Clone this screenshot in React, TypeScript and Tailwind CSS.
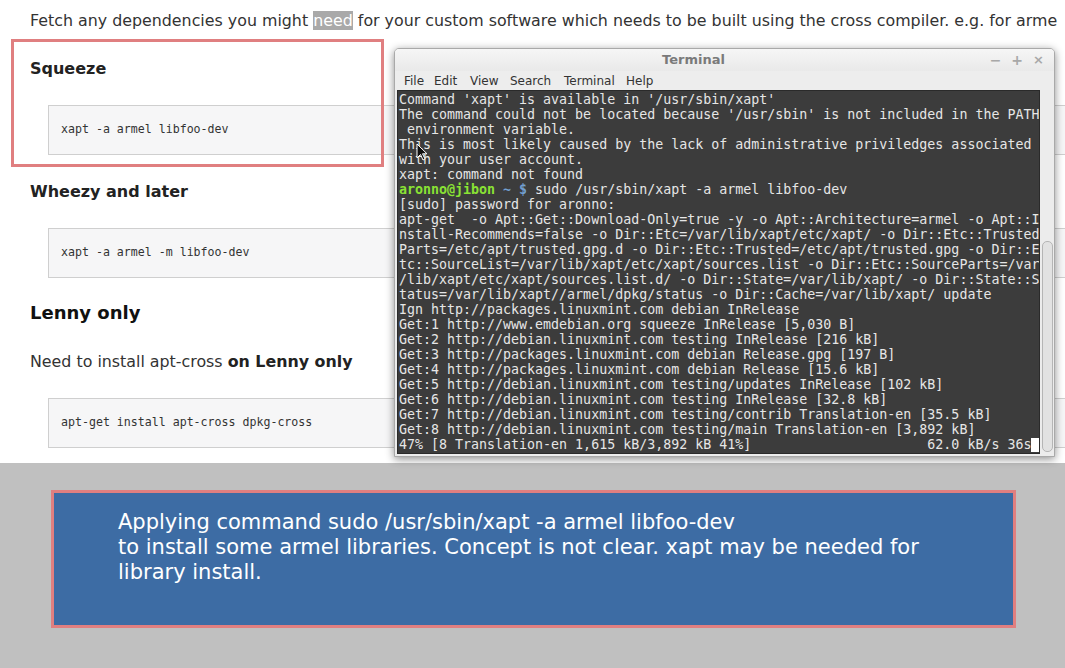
import React from "react";

const termLines: React.ReactNode[] = [
  "Command 'xapt' is available in '/usr/sbin/xapt'",
  "The command could not be located because '/usr/sbin' is not included in the PATH",
  " environment variable.",
  "This is most likely caused by the lack of administrative priviledges associated",
  "with your user account.",
  "xapt: command not found",
  <>
    <span className="font-bold text-[#8ae234]">aronno@jibon</span>
    <span className="font-bold text-[#729fcf]"> ~ $</span>
    {" sudo /usr/sbin/xapt -a armel libfoo-dev"}
  </>,
  "[sudo] password for aronno:",
  "apt-get  -o Apt::Get::Download-Only=true -y -o Apt::Architecture=armel -o Apt::I",
  "nstall-Recommends=false -o Dir::Etc=/var/lib/xapt/etc/xapt/ -o Dir::Etc::Trusted",
  "Parts=/etc/apt/trusted.gpg.d -o Dir::Etc::Trusted=/etc/apt/trusted.gpg -o Dir::E",
  "tc::SourceList=/var/lib/xapt/etc/xapt/sources.list -o Dir::Etc::SourceParts=/var",
  "/lib/xapt/etc/xapt/sources.list.d/ -o Dir::State=/var/lib/xapt/ -o Dir::State::S",
  "tatus=/var/lib/xapt//armel/dpkg/status -o Dir::Cache=/var/lib/xapt/ update",
  "Ign http://packages.linuxmint.com debian InRelease",
  "Get:1 http://www.emdebian.org squeeze InRelease [5,030 B]",
  "Get:2 http://debian.linuxmint.com testing InRelease [216 kB]",
  "Get:3 http://packages.linuxmint.com debian Release.gpg [197 B]",
  "Get:4 http://packages.linuxmint.com debian Release [15.6 kB]",
  "Get:5 http://debian.linuxmint.com testing/updates InRelease [102 kB]",
  "Get:6 http://debian.linuxmint.com testing InRelease [32.8 kB]",
  "Get:7 http://debian.linuxmint.com testing/contrib Translation-en [35.5 kB]",
  "Get:8 http://debian.linuxmint.com testing/main Translation-en [3,892 kB]",
  <>
    {"47% [8 Translation-en 1,615 kB/3,892 kB 41%]                      62.0 kB/s 36s"}
    <span className="inline-block w-[8px] h-[14px] bg-white align-[-3px]" />
  </>,
];

function CodeBlock({ children }: { children: React.ReactNode }) {
  return (
    <div className="ml-[18px] mr-[-40px] h-[50px] border border-[#cfcfcf] bg-[#f6f6f7] flex items-center pl-[12px] font-['DejaVu_Sans_Mono',monospace] text-[11.6px] text-[#333] whitespace-pre">
      {children}
    </div>
  );
}

export default function App() {
  return (
    <div className="relative w-[1065px] h-[668px] overflow-hidden bg-white font-['DejaVu_Sans',sans-serif]">
      {/* Document page */}
      <div className="h-[463px] bg-white pl-[30px] pt-[9px] text-[#333] overflow-hidden">
        <p className="text-[15.85px] leading-[24px] whitespace-nowrap">
          Fetch any dependencies you might{" "}
          <span className="bg-[#a9a9a9] text-white">need</span> for your custom software which needs to be built using the cross compiler. e.g. for arme
        </p>
        <h3 className="mt-[24px] text-[16px] leading-[24px] font-bold text-[#222]">Squeeze</h3>
        <div className="mt-[24px]">
          <CodeBlock>xapt -a armel libfoo-dev</CodeBlock>
        </div>
        <h3 className="mt-[25px] text-[16px] leading-[24px] font-bold text-[#222]">Wheezy and later</h3>
        <div className="mt-[24px]">
          <CodeBlock>xapt -a armel -m libfoo-dev</CodeBlock>
        </div>
        <h2 className="mt-[22px] text-[18px] leading-[26px] font-bold text-[#111]">Lenny only</h2>
        <p className="mt-[24px] text-[15.85px] leading-[24px]">
          Need to install apt-cross <b className="font-bold text-[#222]">on Lenny only</b>
        </p>
        <div className="mt-[24px]">
          <CodeBlock>apt-get install apt-cross dpkg-cross</CodeBlock>
        </div>
      </div>

      {/* Bottom annotation area */}
      <div className="h-[205px] bg-[#c0c0c0] pt-[27px] pl-[51px]">
        <div className="w-[965px] h-[138px] border-[3px] border-[#e07f80] bg-[#3d6ca4] pl-[64px] pt-[17px] text-white text-[21px] leading-[25px]">
          <p className="whitespace-nowrap">Applying command sudo /usr/sbin/xapt -a armel libfoo-dev</p>
          <p className="w-[815px]">
            to install some armel libraries. Concept is not clear. xapt may be needed for library install.
          </p>
        </div>
      </div>

      {/* Red annotation box over Squeeze */}
      <div className="absolute left-[11px] top-[39px] w-[373px] h-[128px] border-[3px] border-[#e07f80] pointer-events-none" />

      {/* Terminal window */}
      <div className="absolute left-[394px] top-[48px] w-[661px] h-[409px] rounded-t-[5px] border border-[#a9a9a9] bg-[#ececec] shadow-[0_2px_8px_rgba(0,0,0,0.45)] flex flex-col overflow-hidden">
        <div className="relative h-[22px] shrink-0 bg-gradient-to-b from-[#f6f6f6] to-[#e9e9e9] flex items-center justify-center pr-[62px]">
          <span className="text-[13px] font-bold text-[#7a7a7a]">Terminal</span>
          <div className="absolute right-[10px] top-0 h-full flex items-center gap-[10px] text-[#a8a8a8] text-[14px] font-bold">
            <span>−</span>
            <span>+</span>
            <span className="text-[13px]">×</span>
          </div>
        </div>
        <div className="h-[19px] shrink-0 flex items-center pl-[9px] text-[12px] text-[#333] bg-[#ededed]">
          <span className="w-[30px]">File</span>
          <span className="w-[36px]">Edit</span>
          <span className="w-[40px]">View</span>
          <span className="w-[54px]">Search</span>
          <span className="w-[62px]">Terminal</span>
          <span>Help</span>
        </div>
        <div className="flex-1 flex pl-[2px] pb-[2px]">
          <div className="w-[643px] bg-[#3c3c3c] border border-[#2a2a2a] pl-[1px] pt-[1px] font-['DejaVu_Sans_Mono',monospace] text-[13.3px] leading-[15px] text-[#e6e6e6] whitespace-pre overflow-hidden">
            {termLines.map((l, i) => (
              <div key={i} className="h-[15px]">{l}</div>
            ))}
          </div>
          <div className="w-[14px] pl-[1px] flex flex-col">
            <div className="mt-[151px] mb-[2px] flex-1 mx-[1px] rounded-[5px] border border-[#b5b5b5] bg-[#e2e2e2]" />
          </div>
        </div>
      </div>

      {/* Mouse pointer */}
      <svg className="absolute left-[416px] top-[143px]" width="12" height="18" viewBox="0 0 12 18">
        <path d="M1 1 L1 15 L4.5 11.5 L7 17 L9 16 L6.5 10.8 L11 10.8 Z" fill="#111" stroke="#fff" strokeWidth="1" />
      </svg>
    </div>
  );
}
